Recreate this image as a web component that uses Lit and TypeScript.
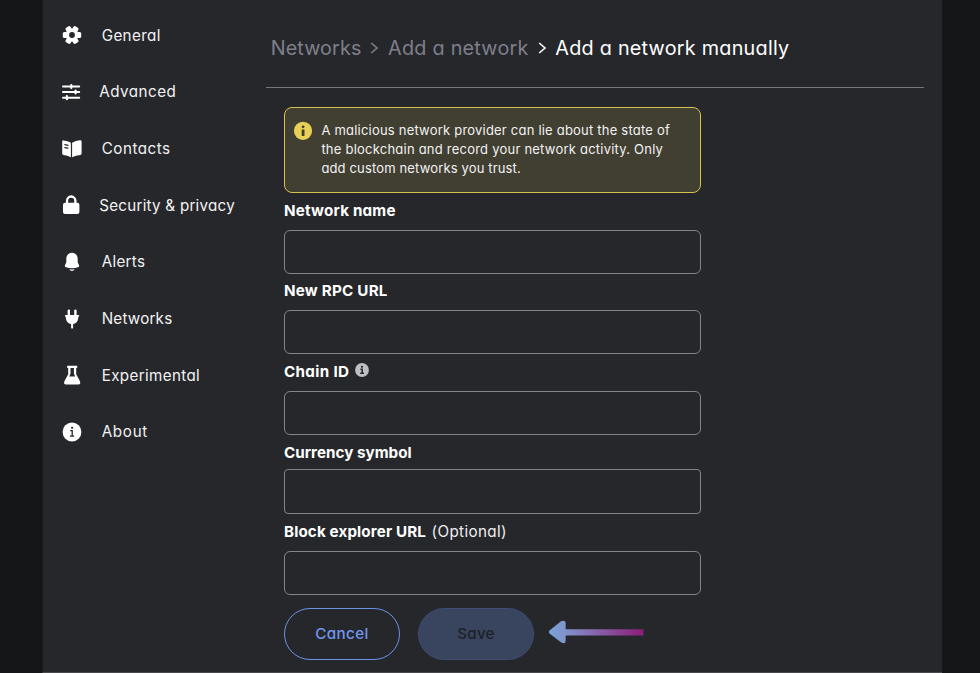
import { LitElement, html, svg, css } from "lit";
import { styleMap } from "lit/directives/style-map.js";

interface NavItem { label: string; icon: keyof typeof icons; track: number; indent: number; }
interface Field { label: string; gap: number; height: number; track: number; line?: number; note?: string; info?: boolean; radius?: number; }

const icons = {
  gear: svg`<g transform="translate(11 11)" fill="#fff"><circle r="6.5"/>
    ${[0, 60, 120, 180, 240, 300].map(a => svg`<rect x="4.2" y="-2.9" width="5" height="5.8" rx="1.5" transform="rotate(${a})"/>`)}
    <circle r="2.9" fill="#26272b"/></g>`,
  sliders: svg`<g stroke="#fff" stroke-width="2" stroke-linecap="round"><path d="M2 5.5H18.2M2 11H18.2M2 16.7H18.2"/>
    <path d="M10.3 4V7M14.6 9.5V12.5M5.9 15.2V18.2" stroke-width="2.2"/></g>`,
  book: svg`<path fill="#fff" d="M1.2 3.5Q1.2 2.2 2.5 2.4Q6.8 2.9 9.9 4.8V19.2Q6.6 17.3 2.4 16.9Q1.2 16.7 1.2 15.6ZM11.1 4.8Q14.5 2.6 19 2.3Q20.6 2.2 20.6 3.6V15.6Q20.6 16.8 19.4 16.9Q14.6 17.4 11.1 19.2Z"/>
    <path d="M3.8 6.7L7 7.3M3.8 9.6L7 10.2" stroke="#26272b" stroke-width="1.2" stroke-linecap="round"/>`,
  lock: svg`<rect x="2" y="8.8" width="16.4" height="11.2" rx="2" fill="#fff"/>
    <path d="M6 9.5V6.9a4.2 4.4 0 0 1 8.4 0V9.5" fill="none" stroke="#fff" stroke-width="2.3"/>`,
  bell: svg`<path fill="#fff" d="M11 1.8C7.3 1.8 5.3 4.5 5.3 8V11.2L3.9 14.5Q3.5 15.8 5 16.3Q11 18 17 16.3Q18.5 15.8 18.1 14.5L16.7 11.2V8C16.7 4.5 14.7 1.8 11 1.8ZM8.2 18.3Q11 18.9 13.8 18.3Q12.9 20.1 11 20.1Q9.1 20.1 8.2 18.3Z"/>`,
  plug: svg`<path d="M7.8 2.6V7M14.4 2.6V7" stroke="#fff" stroke-width="2.4" stroke-linecap="round"/>
    <path fill="#fff" d="M4.6 7H17.5Q18.2 7 18.2 7.8Q18.2 8.6 17.3 8.7C17.3 13 15.5 15.2 12.1 16V20Q12.1 20.5 11.1 20.5Q10.1 20.5 10.1 20V16C6.7 15.2 4.8 13 4.8 8.7Q3.9 8.6 3.9 7.8Q3.9 7 4.6 7Z"/>`,
  flask: svg`<path fill="#fff" fill-rule="evenodd" d="M6.2 1.8H16.2V4.1H15.2V10.2L19 17.3Q20 20.6 17.4 20.6H5Q2.3 20.6 3.4 17.3L7.2 10.2V4.1H6.2ZM9.5 4.1V9.4L8.3 12.6H14.1L12.9 9.4V4.1Z"/>`,
  info: svg`<circle cx="11" cy="11" r="9.4" fill="#fff"/>
    <path d="M9.2 9.6H11.2V15.1M9 15.1H13.2" fill="none" stroke="#26272b" stroke-width="1.3"/><circle cx="11.1" cy="6.8" r="1.1" fill="#26272b"/>`,
};

const nav: NavItem[] = [
  { label: "General", icon: "gear", track: 0.36, indent: 0 },
  { label: "Advanced", icon: "sliders", track: 0.475, indent: -2.4 },
  { label: "Contacts", icon: "book", track: 0.52, indent: 0 },
  { label: "Security & privacy", icon: "lock", track: 0.235, indent: -2.4 },
  { label: "Alerts", icon: "bell", track: 0.3, indent: 0 },
  { label: "Networks", icon: "plug", track: 0.2, indent: 0 },
  { label: "Experimental", icon: "flask", track: 0.36, indent: 0 },
  { label: "About", icon: "info", track: 0.7, indent: 0 },
];

const fields: Field[] = [
  { label: "Network name", gap: 37, height: 44, track: 0.2 },
  { label: "New RPC URL", gap: 36, height: 44, track: 0.22, line: 34 },
  { label: "Chain ID", gap: 37, height: 44, track: 0.33, info: true },
  { label: "Currency symbol", gap: 34, height: 45, track: 0.03, radius: 4 },
  { label: "Block explorer URL", gap: 36.5, height: 44.5, track: 0.128, note: "(Optional)" },
];

const px = (n: number) => `${n}px`;

class AppRoot extends LitElement {
  static styles = css`
    :host { display: block; font-family: Inter, "Open Sans", sans-serif; font-feature-settings: "cv11"; color: #f2f2f3; }
    * { box-sizing: border-box; }
    .page { height: 673px; padding: 0 38px 0 42px; background: #151618; overflow: hidden; }
    .panel { height: 673px; display: flex; background: #26272b; border-left: 1px solid #1c1d20; border-bottom: 1px solid #48494d; }
    nav { width: 223px; padding: 6.8px 0 0 17.5px; flex: none; }
    .item { height: 56.7px; display: flex; align-items: center; font-size: 15.2px; white-space: nowrap; }
    .item svg { width: 22px; height: 22px; flex: none; margin-right: 19.2px; }
    .label { margin-left: var(--indent); }
    main { flex: 1; padding-right: 18px; }
    .crumbs { height: 88px; padding: 28px 0 0 4.7px; display: flex; font-size: 19.8px; line-height: 41px; white-space: nowrap; color: #7f7f8b; border-bottom: 1px solid #75767e; }
    .crumbs svg { width: 9px; height: 14px; margin: 12.8px 8.6px 0 9px; flex: none; fill: none; stroke: currentColor; stroke-width: 1.6; vertical-align: top; }
    .here { color: #fff; }
    .c1 { letter-spacing: 0.1px; } .c2 { letter-spacing: 0.25px; } .c3 { letter-spacing: 0.25px; }
    .form { width: 417px; margin: 19px 0 0 18px; }
    .alert { height: 86px; display: flex; padding: 13px 0 0 7.8px; border: 1px solid #d8c14f; border-radius: 8px; background: #413f32; font-size: 13px; line-height: 19px; white-space: nowrap; }
    .alert svg { width: 20px; height: 20px; margin: -0.4px 8.6px 0 0; flex: none; }
    .w1 { letter-spacing: 0.21px; } .w2 { letter-spacing: 0.225px; } .w3 { letter-spacing: 0.15px; }
    .name { display: flex; font-size: 15.2px; font-weight: 700; color: #fff; white-space: nowrap; }
    .name svg { width: 14px; height: 14px; margin: 9px 0 0 5.6px; }
    .note { font-weight: 400; margin-left: 5.5px; letter-spacing: 0.38px; color: #eeeef0; }
    .box { border: 1px solid #83848a; border-radius: 6px; }
    .actions { display: flex; align-items: center; margin-top: 13px; }
    .btn { width: 116px; height: 52px; border-radius: 26px; border: 1px solid #6d93e8; display: flex; align-items: center; justify-content: center; padding-bottom: 2px; font-size: 15.2px; font-weight: 500; color: #7197ee; letter-spacing: 0.4px; }
    .save { margin-left: 18px; background: #39445e; border-color: #3d4d75; color: #1c1f26; letter-spacing: 0.234px; }
    .arrow { width: 96px; height: 24px; margin: 0 0 4px 14px; flex: none; }
  `;

  render() {
    const chevron = html`<svg viewBox="0 0 9 14"><path d="M1.2 2L7 7L1.2 12" /></svg>`;
    return html`<div class="page"><div class="panel">
      <nav>${nav.map(n => html`<div class="item">
        <svg viewBox="0 0 22 22">${icons[n.icon]}</svg>
        <span class="label" style=${styleMap({ "--indent": px(n.indent), letterSpacing: px(n.track) })}>${n.label}</span>
      </div>`)}</nav>
      <main>
        <div class="crumbs"><span class="c1">Networks</span>${chevron}<span class="c2">Add a network</span><span class="here">${chevron}</span><span class="here c3">Add a network manually</span></div>
        <div class="form">
          <div class="alert">
            <svg viewBox="0 0 20 20"><circle cx="10" cy="9.8" r="9.1" fill="#e8cf58"/><rect x="8.7" y="8.4" width="2.8" height="6.6" rx=".4" fill="#413f32"/><circle cx="10.1" cy="5.8" r="1.4" fill="#413f32"/></svg>
            <div>
              <div class="w1">A malicious network provider can lie about the state of</div>
              <div class="w2">the blockchain and record your network activity. Only</div>
              <div class="w3">add custom networks you trust.</div>
            </div>
          </div>
          ${fields.map(f => html`
            <div class="name" style=${styleMap({ height: px(f.gap), lineHeight: px(f.line ?? 35) })}>
              <span style=${styleMap({ letterSpacing: px(f.track) })}>${f.label}</span>
              ${f.info ? html`<svg viewBox="0 0 14 14"><circle cx="7" cy="7" r="6.9" fill="#bdbec1"/><path d="M5.4 6.2H7.2V10.3M5.2 10.3H9" fill="none" stroke="#26272b" stroke-width="1.5"/><circle cx="7" cy="3.8" r="1.1" fill="#26272b"/></svg>` : null}
              ${f.note ? html`<span class="note">${f.note}</span>` : null}
            </div>
            <div class="box" style=${styleMap({ height: px(f.height), borderRadius: px(f.radius ?? 6) })}></div>`)}
          <div class="actions">
            <div class="btn">Cancel</div>
            <div class="btn save">Save</div>
            <svg class="arrow" viewBox="0 0 96 24">
              <defs><linearGradient id="fade" gradientUnits="userSpaceOnUse" x1="0" y1="0" x2="96" y2="0"><stop offset="0" stop-color="#76a3da"/><stop offset=".18" stop-color="#8193cb"/><stop offset="1" stop-color="#8c1b78"/></linearGradient></defs>
              <path fill="url(#fade)" d="M1.5 10.5L13 1.3Q17.7 -.4 17.7 3.5V9.2H95.5V15.4H17.7V20.5Q17.7 24.4 13.3 22.6L1.5 13.5Q.2 12 1.5 10.5Z"/>
            </svg>
          </div>
        </div>
      </main>
    </div></div>`;
  }
}
customElements.define("app-root", AppRoot);
